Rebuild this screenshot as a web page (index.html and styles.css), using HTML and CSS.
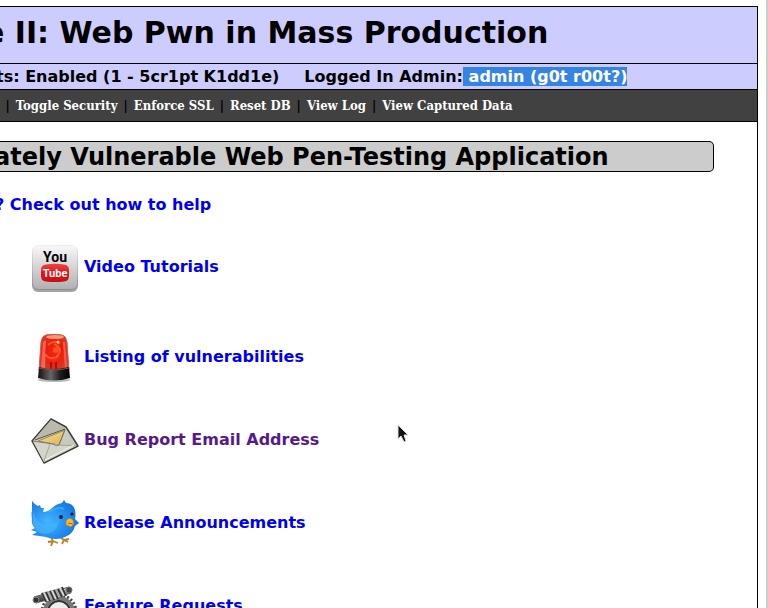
FILE: index.html
```html
<!DOCTYPE html>
<html lang="en">
<head>
<meta charset="utf-8">
<title>Web Pwn in Mass Production</title>
<link rel="stylesheet" href="styles.css">
</head>
<body>
<div class="page">
  <header class="banner">
    <h1 class="title">e II: Web Pwn in Mass Production</h1>
    <div class="status">
      <span>ts: Enabled (1 - 5cr1pt K1dd1e)</span>
      <span>Logged In Admin:<mark class="selected"> admin (g0t r00t?)</mark></span>
    </div>
  </header>
  <nav class="menu">
    <a href="#" class="current">s</a><span class="bar">|</span>
    <a href="#">Toggle Security</a><span class="bar">|</span>
    <a href="#">Enforce SSL</a><span class="bar">|</span>
    <a href="#">Reset DB</a><span class="bar">|</span>
    <a href="#">View Log</a><span class="bar">|</span>
    <a href="#">View Captured Data</a>
  </nav>
  <main class="content">
    <h2 class="heading">ately Vulnerable Web Pen-Testing Application</h2>
    <a href="#" class="help">? Check out how to help</a>
    <ul class="links">
      <li class="item first">
        <svg class="icon" viewBox="0 0 48 48" aria-hidden="true">
          <defs>
            <linearGradient id="tile" x1="0" y1="0" x2="0" y2="1"><stop offset="0" stop-color="#f8f8f8"/><stop offset=".5" stop-color="#d4d4d4"/><stop offset="1" stop-color="#b0b0b0"/></linearGradient>
            <linearGradient id="tube" x1="0" y1="0" x2="0" y2="1"><stop offset="0" stop-color="#f04444"/><stop offset=".5" stop-color="#e0161c"/><stop offset="1" stop-color="#c60d13"/></linearGradient>
            <linearGradient id="edge" x1="0" y1="0" x2="0" y2="1"><stop offset="0" stop-color="#eee"/><stop offset="1" stop-color="#8c8c8c"/></linearGradient>
          </defs>
          <rect x="1" y="3" width="46" height="45" rx="6" fill="url(#edge)" opacity=".8"/>
          <rect x="1.500" y="1.500" width="45" height="44" rx="6" fill="url(#tile)" stroke="url(#edge)"/>
          <path d="M15 20.500Q24 19 33 20.500Q38 21 38 26V32Q38 37 33 37.500Q24 38.500 15 37.500Q10 37 10 32V26Q10 21 15 20.500Z" fill="url(#tube)"/>
          <text x="24" y="18" class="logo-word logo-you">You</text>
          <text x="24" y="33" class="logo-word logo-tube">Tube</text>
        </svg>
        <a href="#">Video Tutorials</a>
      </li>
      <li class="item">
        <svg class="icon" viewBox="0 0 48 48" aria-hidden="true">
          <defs>
            <radialGradient id="lamp" cx=".48" cy=".45" r=".65"><stop offset="0" stop-color="#ff5425"/><stop offset=".45" stop-color="#ee200d"/><stop offset="1" stop-color="#c8493b"/></radialGradient>
            <linearGradient id="base"><stop offset="0" stop-color="#111"/><stop offset=".4" stop-color="#666"/><stop offset=".7" stop-color="#1b1b1b"/><stop offset="1" stop-color="#000"/></linearGradient>
          </defs>
          <ellipse cx="23" cy="46" rx="16" ry="2" fill="#777" opacity=".5"/>
          <path d="M10 8Q11 2 15 1Q23-1 31 1Q35 2 36 8L38 36Q23 42 8 36Z" fill="url(#lamp)" stroke="#c96455"/>
          <path d="M12 8L10 34L14 36L15 6Z" fill="#ffb09a" opacity=".45"/>
          <path d="M32 8L34 35L36 33L34 8Z" fill="#ff8068" opacity=".6"/>
          <ellipse cx="24" cy="3" rx="9" ry="2" fill="#ffdfb8" opacity=".6"/>
          <path d="M15 12Q20 4 29 7Q35 13 29 23Q19 28 14 20Z" fill="#e61609" opacity=".7"/>
          <path d="M17 11Q23 5 29 10M14 20Q19 27 28 22M23 10Q34 15 25 23" fill="none" stroke="#ff7c3c" stroke-width="2" opacity=".6"/>
          <circle cx="25" cy="16" r="3" fill="#ff6230" opacity=".7"/><circle cx="27" cy="8" r="1.500" fill="#ffe081"/>
          <path d="M20 28V36M25 28V36" stroke="#a3130d" stroke-width="2"/>
          <path d="M8 33Q23 37 38 33L39 44Q23 49 7 44Z" fill="url(#base)"/>
          <path d="M8 34Q23 38 38 34" fill="none" stroke="#75514d"/>
        </svg>
        <a href="#">Listing of vulnerabilities</a>
      </li>
      <li class="item">
        <svg class="icon" viewBox="0 0 48 48" aria-hidden="true">
          <defs>
            <linearGradient id="paper" x1="0" y1="0" x2="1" y2="1"><stop offset="0" stop-color="#deded3"/><stop offset="1" stop-color="#bcbcae"/></linearGradient>
            <linearGradient id="letter" x1="0" y1="0" x2="1" y2="1"><stop offset="0" stop-color="#f7dfa0"/><stop offset="1" stop-color="#dfb34f"/></linearGradient>
          </defs>
          <path d="M1 24L20 2L35 10L47 29L13 46Z" fill="url(#paper)" stroke="#3e3e39" stroke-width="1.500" stroke-linejoin="round"/>
          <path d="M2 24L20 3L34 11Z" fill="#b9b9ae"/>
          <path d="M7 24L34 13L28 28Z" fill="url(#letter)" stroke="#85733f" stroke-width=".8"/>
          <path d="M2 24L18 26L13 45Z" fill="#d5d5cb"/>
          <path d="M18 26L28 28L45 29L13 45Z" fill="#d4d4ca"/>
          <path d="M2 24L22 27Q26 30 28 28L34 12" fill="none" stroke="#77776e"/>
          <path d="M19 27L13 44M28 28L45 29" fill="none" stroke="#a5a59a"/>
          <path d="M4 23L34 12" stroke="#55554f" fill="none"/>
          <path d="M14 43L43 28" stroke="#f5f5ee" fill="none"/>
        </svg>
        <a href="#" class="visited">Bug Report Email Address</a>
      </li>
      <li class="item">
        <svg class="icon" viewBox="0 0 48 48" aria-hidden="true">
          <defs>
            <radialGradient id="bird" cx=".35" cy=".55" r=".7"><stop offset="0" stop-color="#43b5ff"/><stop offset=".6" stop-color="#218bf0"/><stop offset="1" stop-color="#146fd5"/></radialGradient>
          </defs>
          <path d="M20 37L22 41L17 42M22 41L20 46M22 41L27 43M29 37L33 40L31 44M33 40L37 42M33 40L38 39" fill="none" stroke="#bc831d" stroke-width="1.800"/>
          <path d="M1 1Q3 4 7 6L9 5L10 8L13 8L12 12Q17 12 21 8Q25 4 31 3L33 0L35 3Q42 3 44 10Q45 16 44 19L48 23L44 26Q42 34 34 37Q25 41 15 37Q9 36 1 35L6 32L0 30L4 28Q0 25 1 19Q0 13 1 11Z" fill="url(#bird)"/>
          <path d="M2 12Q6 23 12 24Q22 26 28 20Q27 32 15 34Q5 33 2 26Z" fill="#46b8ff" opacity=".6"/>
          <path d="M18 12Q27 6 33 9" fill="none" stroke="#55b5ff" stroke-width="2" opacity=".5"/>
          <circle cx="30" cy="17" r="1.900" fill="#07172d"/><circle cx="41" cy="14" r="1.600" fill="#07172d"/>
          <path d="M35 21Q38 16 42 20L43 24L40 27L35 25Z" fill="#f4bc36" stroke="#b27817" stroke-width=".7"/>
          <path d="M37 23L42 24" stroke="#a36714"/>
        </svg>
        <a href="#">Release Announcements</a>
      </li>
      <li class="item">
        <svg class="icon" viewBox="0 -2 48 48" aria-hidden="true">
          <defs><linearGradient id="metal" x1="0" y1="0" x2="0" y2="1"><stop offset="0" stop-color="#eee"/><stop offset=".5" stop-color="#777"/><stop offset="1" stop-color="#222"/></linearGradient></defs>
          <circle cx="28" cy="27" r="17" fill="none" stroke="#444" stroke-width="3" stroke-dasharray="2 2"/>
          <circle cx="28" cy="27" r="14" fill="#ddd" stroke="#777" stroke-width="4"/>
          <circle cx="28" cy="27" r="11" fill="#eee" stroke="#333" stroke-width="2"/>
          <path d="M3 12L38 2L40 8L5 18Z" fill="url(#metal)" stroke="#555"/>
          <path d="M10 8L32 2L35 10L14 17Z" fill="#aaa"/>
          <path d="M11 8L15 17M15 7L19 16M19 6L23 15M23 5L27 14M27 4L31 12M31 2L35 11" stroke="#333" stroke-width="1.800"/>
          <path d="M13 8L17 16M21 6L25 14M29 3L33 11" stroke="#eee"/>
          <circle cx="5" cy="15" r="3" fill="#333" stroke="#888"/><circle cx="38" cy="5" r="3" fill="#444" stroke="#777"/>
        </svg>
        <a href="#">Feature Requests</a>
      </li>
    </ul>
  </main>
</div>
<svg class="pointer" viewBox="0 0 12 20" aria-hidden="true"><path d="M1 1V15L4 12L7 18L9 17L7 11H11Z" fill="#111" stroke="#ddd"/></svg>
</body>
</html>
```
FILE: styles.css
```css
* {
  box-sizing: border-box;
}

body {
  margin: 0;
  height: 100vh;
  padding: 6px 8px 0 0;
  border-right: 2px solid #ccc;
  background: #fff;
  color: #000;
  font: bold 16px/19px "DejaVu Sans", sans-serif;
  overflow: hidden;
}

.page {
  border: 1px solid #000;
  border-left: 0;
}

.banner {
  background: #ccf;
}

.title {
  margin: 0;
  padding: 7px 0 11px;
  border-bottom: 1px solid #000;
  font-size: 30px;
  line-height: 38px;
  text-indent: -16px;
  white-space: nowrap;
}

.status {
  display: flex;
  gap: 25px;
  margin-left: -4px;
  padding: 3px 0;
  border-bottom: 1px solid #000;
  white-space: pre;
}

.selected {
  background: #3584e4;
  color: #fff;
}

.menu {
  display: flex;
  gap: 6px;
  margin-left: -7px;
  padding: 7px 0 6px;
  border-bottom: 1px solid #000;
  background: #414141;
  font: bold 13px/18px "DejaVu Serif Condensed", "DejaVu Serif", serif;
  white-space: nowrap;
}

.menu a {
  color: #fff;
  text-decoration: none;
}

.menu .current {
  color: #c87060;
}

.content {
  padding-top: 19px;
}

.heading {
  margin: 0 43px 0 0;
  padding-top: 2px;
  border: 1px solid #000;
  border-left: 0;
  border-radius: 0 5px 5px 0;
  background: #ccc;
  font-size: 24px;
  line-height: 27px;
  text-indent: -6px;
  white-space: nowrap;
}

.help {
  display: block;
  margin: 23px 0 0 -5px;
}

.content a {
  color: #00e;
  text-decoration: none;
}

.content .visited {
  color: #551a8b;
}

.links {
  display: grid;
  gap: 35px;
  margin: 0;
  padding: 30px 0 0 31px;
  list-style: none;
}

.item {
  display: flex;
  align-items: center;
  gap: 5px;
}

.item a {
  padding-bottom: 4px;
}

.first {
  margin-bottom: 7px;
}

.icon {
  width: 48px;
  height: 48px;
}

.logo-word {
  font-family: Roboto, sans-serif;
  text-anchor: middle;
}

.logo-you {
  font-size: 14px;
}

.logo-tube {
  fill: #fff;
  font-size: 11px;
}

.pointer {
  position: absolute;
  top: 424px;
  left: 397px;
  width: 12px;
  height: 20px;
}
```
